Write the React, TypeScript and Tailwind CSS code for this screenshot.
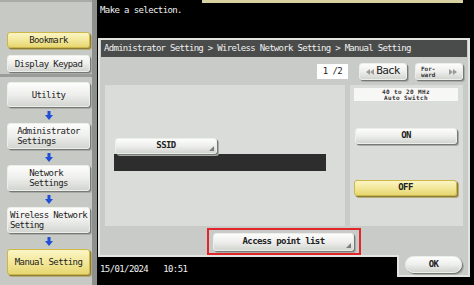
import React from "react";

const mono = "font-['DejaVu_Sans_Mono','Liberation_Mono',monospace]";
const btnGray =
  "bg-linear-to-b from-[#fdfdfc] via-[#eeefec] to-[#d3d5d1] border border-[#eceeea] shadow-[1px_1px_0_#777976,2px_2px_0_#a9aba7] rounded-[3px]";
const btnYellow =
  "bg-linear-to-b from-[#fbf5c4] via-[#f3e89a] to-[#e6d670] border border-[#cdb64a] shadow-[1px_1px_0_#8a7d3a,2px_2px_0_#b6ab74] rounded-[3px]";

function Arrow() {
  return (
    <div className="h-[16px] flex items-center justify-center">
      <svg width="8" height="9" viewBox="0 0 8 9">
        <path d="M2.5 0h3v4h2.5L4 9 0 4h2.5z" fill="#1f4fd8" />
      </svg>
    </div>
  );
}

function Corner() {
  return (
    <svg className="absolute right-[2px] bottom-[2px]" width="5" height="5" viewBox="0 0 5 5">
      <path d="M5 0V5H0z" fill="#7d7f7c" />
    </svg>
  );
}

function SideBtn({ yellow, h, children }: { yellow?: boolean; h: string; children: React.ReactNode }) {
  return (
    <div className={`${yellow ? btnYellow : btnGray} ${h} flex items-center justify-center`}>
      <div className="text-left leading-[10px] text-[#1c1c1c]">{children}</div>
    </div>
  );
}

export default function App() {
  return (
    <div className={`w-[474px] h-[285px] bg-black flex overflow-hidden ${mono} text-[9px] tracking-[-0.6px]`}>
      {/* Sidebar */}
      <div className="w-[97px] h-full flex flex-col bg-[#c7c9c5] border-r-[5px] border-[#8e908d]">
        <div className="h-[74px] flex flex-col pl-[7px] pr-[2px] pt-[30px] border-t-[2px] border-[#a9aba7]">
          <SideBtn yellow h="h-[16px]">Bookmark</SideBtn>
          <div className="h-[7px]" />
          <SideBtn h="h-[17px]">Display Keypad</SideBtn>
        </div>
        <div className="h-[3px] bg-[#9a9c99]" />
        <div className="flex flex-col pl-[7px] pr-[2px] pt-[5px]">
          <SideBtn h="h-[25px]">Utility</SideBtn>
          <Arrow />
          <SideBtn h="h-[26px]">
            Administrator
            <br />
            Settings
          </SideBtn>
          <Arrow />
          <SideBtn h="h-[26px]">
            Network
            <br />
            Settings
          </SideBtn>
          <Arrow />
          <SideBtn h="h-[26px]">
            Wireless Network
            <br />
            Setting
          </SideBtn>
          <Arrow />
          <SideBtn yellow h="h-[26px]">Manual Setting</SideBtn>
        </div>
      </div>

      {/* Main */}
      <div className="flex-1 flex flex-col">
        <div className="h-[38px] flex flex-col">
          <div className="h-[3px] ml-[105px] w-[261px] bg-[#d8d1a2]" />
          <div className="pl-[3px] pt-[2px] text-[#f2f2f2] leading-[10px]">Make a selection.</div>
        </div>

        {/* Panel */}
        <div className="ml-[1px] w-[372px] h-[219px] bg-[#c8cbc7] border-2 border-[#e3e5e1] flex flex-col">
          <div className="mx-[1px] h-[17px] bg-[#4a4c4b] text-[#f0f0f0] flex items-center pl-[3px] leading-none tracking-[-0.7px]">
            Administrator Setting &gt; Wireless Network Setting &gt; Manual Setting
          </div>
          <div className="mt-[6px] h-[17px] flex justify-end items-center pr-[5px]">
            <div className="w-[31px] h-[15px] bg-white flex items-center justify-center text-[#222]">1 /2</div>
            <div className={`ml-[11px] w-[48px] h-[17px] ${btnGray} flex items-center justify-center gap-[2px]`}>
              <svg width="8" height="6" viewBox="0 0 8 6">
                <path d="M4 0v6L0 3zM8 0v6L4 3z" fill="#9a9c99" />
              </svg>
              <span className="text-[11px] tracking-[-0.8px] text-[#222]">Back</span>
            </div>
            <div className={`ml-[8px] w-[48px] h-[17px] ${btnGray} flex items-center justify-between pl-[5px] pr-[5px]`}>
              <span className="text-[6px] leading-[6px] tracking-[0px] font-bold text-[#333]">
                For-
                <br />
                ward
              </span>
              <svg width="8" height="6" viewBox="0 0 8 6">
                <path d="M0 0v6L4 3zM4 0v6L8 3z" fill="#9a9c99" />
              </svg>
            </div>
          </div>
          <div className="mt-[5px] h-[141px] flex px-[5px] gap-[5px]">
            <div className="w-[240px] h-full bg-[#d9dcd8] flex flex-col pt-[53px] pl-[9px]">
              <div className={`relative ml-[1px] w-[102px] h-[16px] ${btnGray} flex items-center justify-center font-bold text-[#222]`}>
                SSID
                <Corner />
              </div>
              <div className="w-[212px] h-[17px] bg-[#2c2d2c]" />
            </div>
            <div className="w-[113px] h-full bg-[#d9dcd8] flex flex-col pt-[3px] pl-[4px] pr-[5px]">
              <div className="h-[13px] bg-[#f7f7f6] flex flex-col items-center justify-center text-[6px] leading-[6px] tracking-[0.4px] font-bold text-[#333]">
                <span className="block h-[6px]">40 to 20 MHz</span>
                <span className="block h-[6px]">Auto Switch</span>
              </div>
              <div className={`mt-[27px] ml-[1px] mr-[1px] h-[16px] ${btnGray} flex items-center justify-center font-bold text-[#222]`}>
                ON
              </div>
              <div className={`mt-[36px] mr-[1px] h-[16px] ${btnYellow} flex items-center justify-center font-bold text-[#222]`}>
                OFF
              </div>
            </div>
          </div>
          <div className="flex-1 flex items-start pt-[2px] pl-[107px]">
            <div className="w-[154px] h-[27px] border-2 border-[#e0262b] pl-[4px] pr-[5px] pt-[3px]">
              <div className={`relative h-[18px] ${btnGray} flex items-center justify-center text-[#222] font-bold`}>
                Access point list
                <Corner />
              </div>
            </div>
          </div>
        </div>

        {/* Bottom */}
        <div className="flex items-start">
          <div className="pl-[3px] pt-[7px] text-[#f2f2f2] leading-[10px] flex gap-[15px]">
            <span>15/01/2024</span>
            <span>10:51</span>
          </div>
          <div className="ml-auto mr-[4px] -mt-[2px] relative z-10 w-[73px] h-[22px] bg-[#c8cbc7] border-2 border-t-0 border-[#e3e5e1] flex items-start pt-[1px] pl-[6px]">
            <div className="w-[57px] h-[17px] rounded-[9px] bg-linear-to-b from-[#fdfdfc] via-[#eeefec] to-[#cfd1cd] border border-[#eceeea] shadow-[1px_1px_0_#777976,2px_2px_0_#a9aba7] flex items-center justify-center font-bold text-[#222]">
              OK
            </div>
          </div>
        </div>
      </div>
    </div>
  );
}
